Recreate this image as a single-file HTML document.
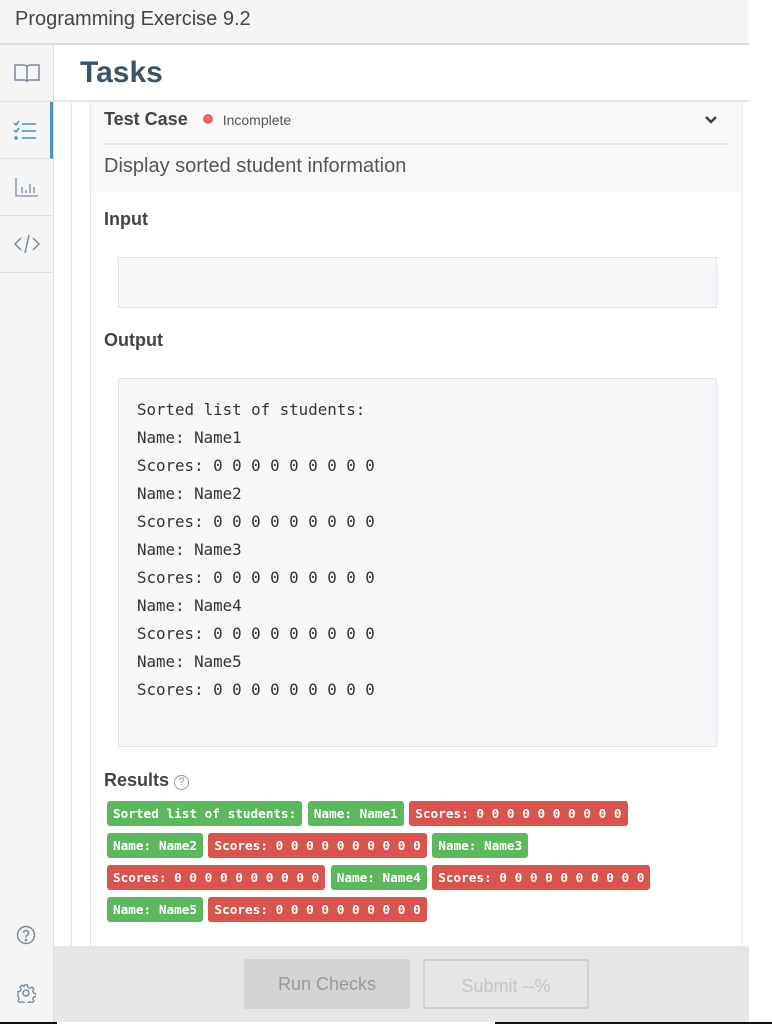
<!DOCTYPE html>
<html><head><meta charset="utf-8"><style>
*{box-sizing:border-box;margin:0;padding:0}
body{width:772px;height:1024px;background:#fff;font-family:"Liberation Sans",sans-serif;position:relative;overflow:hidden;color:#333}
.hdr{position:absolute;left:0;top:0;width:749px;height:45px;background:#f5f5f5;border-bottom:2px solid #ddd;font-size:20px;color:#444;padding:8px 0 0 15px}
.side{position:absolute;left:0;top:45px;width:54px;height:977px;background:#f5f5f5;border-right:1px solid #e0e0e0}
.si{height:57px;border-bottom:1px solid #e0e0e0;display:flex;align-items:center;justify-content:center;position:relative}
.tasks{position:absolute;left:54px;top:45px;width:695px;height:57px;border-bottom:2px solid #e6e6e6;font-weight:bold;font-size:30px;color:#3d5266;padding:11px 0 0 26px}
.strip{position:absolute;left:71px;top:102px;width:20px;height:844px;border-left:1px solid #e6e6e6;border-right:1px solid #e6e6e6}
.card{position:absolute;left:91px;top:102px;width:652px;height:844px;border-right:1px solid #eee}
.chead{background:#f8f8f8;height:90px;padding:0 13px}
.l{position:absolute;font-size:18px;color:#444;left:13px}
.box{position:absolute;left:27px;width:599px;background:#f6f7f9;border:1px solid #dde3e8}
pre{font-family:"DejaVu Sans Mono",monospace;font-size:15.8px;line-height:28px;color:#333;padding:17px 0 0 18px}
.bw{position:absolute;left:16px;top:699px;width:560px}
.b{display:inline-block;height:25px;line-height:25px;font-family:"DejaVu Sans Mono",monospace;font-weight:bold;font-size:12.7px;color:#fff;padding:0 6px;border-radius:3px;margin:0 1px 7px 0;white-space:pre}
.g{background:#5cb85c}.r{background:#d9534f}
.foot{position:absolute;left:54px;top:946px;width:695px;height:76px;background:#e6e6e6}
.btn{position:absolute;top:13px;width:166px;height:50px;font-size:18px;color:#999;text-align:center;line-height:50px}
</style></head><body>
<div class="hdr">Programming Exercise 9.2</div>
<div class="side">
<div class="si"><svg width="26" height="20" viewBox="0 0 26 20" fill="none" stroke="#7a8a99" stroke-width="1.5"><path d="M1 2h9c2 0 3 1 3 3v14c0-1-1-2-3-2H1z M25 2h-9c-2 0-3 1-3 3v14c0-1 1-2 3-2h9z"/></svg></div>
<div class="si" style="border-right:3px solid #4a90c8"><svg width="24" height="20" viewBox="0 0 24 20" fill="none" stroke="#4a90c8" stroke-width="1.5"><path d="M1 3l2 2 3-4M1 10l2 2 3-4M9 4h14M9 11h14M9 18h14"/><circle cx="3" cy="18" r="1" fill="#4a90c8"/></svg></div>
<div class="si"><svg width="24" height="20" viewBox="0 0 24 20" fill="none" stroke="#7a8a99" stroke-width="1.3"><path d="M1 1v18h22M7 16v-6M11 16v-3M15 16v-9M19 16v-6"/></svg></div>
<div class="si"><svg width="26" height="22" viewBox="0 0 26 22" fill="none" stroke="#7a8a99" stroke-width="1.5"><path d="M7 5l-6 6 6 6M19 5l6 6-6 6M15 2l-4 18"/></svg></div>
<div style="position:absolute;top:880px;left:16px"><svg width="20" height="20" viewBox="0 0 20 20" fill="none" stroke="#7a8a99" stroke-width="1.5"><circle cx="10" cy="10" r="8.5"/><path d="M7.5 8a2.5 2.5 0 1 1 3.5 2.3c-.7.3-1 .8-1 1.5v.7"/><circle cx="10" cy="15" r=".6" fill="#7a8a99"/></svg></div>
<div style="position:absolute;top:938px;left:16px"><svg width="20" height="20" viewBox="0 0 20 20" fill="none" stroke="#7a8a99" stroke-width="1.4"><path d="M8.5 1.5h3l.5 2.5 2 1 2.3-1.2 2 2-1.2 2.3.9 2 2.5.5v3l-2.5.5-.9 2 1.2 2.3-2 2-2.3-1.2-2 .9-.5 2.5h-3l-.5-2.5-2-.9-2.3 1.2-2-2 1.2-2.3-.9-2L1.5 11.5v-3L4 8l.9-2-1.2-2.3 2-2L8 3z" transform="scale(.95) translate(.5 .5)"/><circle cx="10" cy="10" r="3"/></svg></div>
</div>
<div class="tasks">Tasks</div>
<div class="strip"></div>
<div class="card">
<div class="chead">
<div style="height:43px;border-bottom:2px solid #e6e6e6;position:relative;font-size:18px;color:#444;padding-top:7px;font-weight:bold">Test Case <span style="display:inline-block;width:10px;height:10px;border-radius:50%;background:#e8636a;margin:0 10px 0 10px;vertical-align:1px"></span><span style="font-size:14px;font-weight:normal;color:#555">Incomplete</span>
<svg style="position:absolute;right:12px;top:13px" width="12" height="10" viewBox="0 0 12 10"><path d="M1 2l5 5 5-5" stroke="#444" stroke-width="2.5" fill="none"/></svg></div>
<div style="font-size:20px;color:#555;padding-top:10px">Display sorted student information</div>
</div>
<div class="l" style="top:107px;font-weight:bold">Input</div>
<div class="box" style="top:155px;height:51px"></div>
<div class="l" style="top:228px;font-weight:bold">Output</div>
<div class="box" style="top:276px;height:369px"><pre>Sorted list of students:
Name: Name1
Scores: 0 0 0 0 0 0 0 0 0
Name: Name2
Scores: 0 0 0 0 0 0 0 0 0
Name: Name3
Scores: 0 0 0 0 0 0 0 0 0
Name: Name4
Scores: 0 0 0 0 0 0 0 0 0
Name: Name5
Scores: 0 0 0 0 0 0 0 0 0</pre></div>
<div class="l" style="top:668px;font-weight:bold">Results <span style="display:inline-block;width:15px;height:15px;border:1.3px solid #999;border-radius:50%;font-size:11px;color:#999;text-align:center;line-height:13px;font-weight:normal;vertical-align:1px">?</span></div>
<div class="bw"><span class="b g">Sorted list of students:</span> <span class="b g">Name: Name1</span> <span class="b r">Scores: 0 0 0 0 0 0 0 0 0 0</span><br><span class="b g">Name: Name2</span> <span class="b r">Scores: 0 0 0 0 0 0 0 0 0 0</span> <span class="b g">Name: Name3</span><br><span class="b r">Scores: 0 0 0 0 0 0 0 0 0 0</span> <span class="b g">Name: Name4</span> <span class="b r">Scores: 0 0 0 0 0 0 0 0 0 0</span><br><span class="b g">Name: Name5</span> <span class="b r">Scores: 0 0 0 0 0 0 0 0 0 0</span></div>
</div>
<div class="foot">
<div class="btn" style="left:190px;background:#d4d4d4;border-radius:2px">Run Checks</div>
<div class="btn" style="left:369px;border:2px solid #d0d0d0;color:#c4c4c4">Submit --%</div>
</div>
<div style="position:absolute;left:0;top:1022px;width:57px;height:2px;background:#111"></div>
<div style="position:absolute;left:495px;top:1022px;width:277px;height:2px;background:#111"></div>
</body></html>
